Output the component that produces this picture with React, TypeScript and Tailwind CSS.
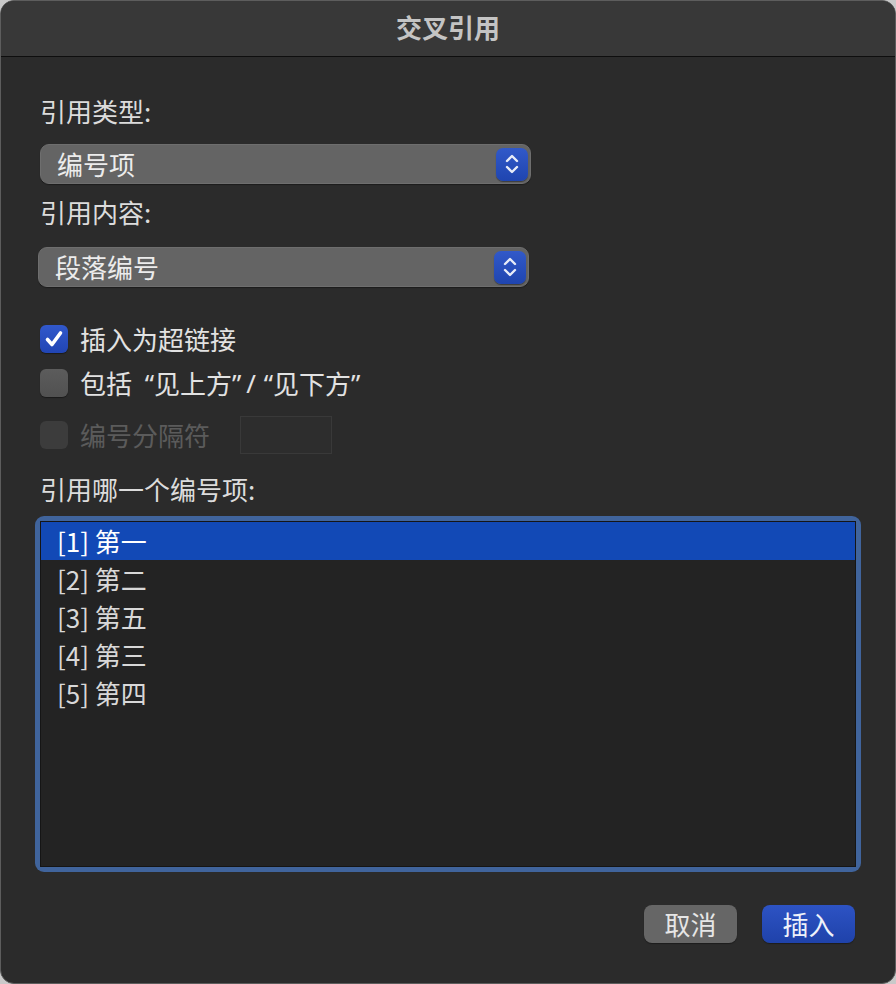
import { useState } from "react";

const font = { fontFamily: '"Noto Sans CJK SC", "Noto Sans", sans-serif' };
const latin = { fontFamily: '"Noto Sans", "Liberation Sans", sans-serif' };

const items = ["[1] 第一", "[2] 第二", "[3] 第五", "[4] 第三", "[5] 第四"];

function Stepper() {
  return (
    <div className="flex h-[33px] w-[32px] items-center justify-center rounded-[7px] bg-gradient-to-b from-[#3159c9] to-[#1f45b0] shadow-[0_1px_1px_rgba(0,0,0,0.4)]">
      <svg width="16" height="22" viewBox="0 0 16 22" fill="none" stroke="#e8ecf8" strokeWidth="2.4" strokeLinecap="round" strokeLinejoin="round">
        <path d="M3 8 L8 3 L13 8" />
        <path d="M3 14 L8 19 L13 14" />
      </svg>
    </div>
  );
}

function Select({ value, className }: { value: string; className?: string }) {
  return (
    <div className={`flex h-[40px] w-[491px] items-center justify-between rounded-[9px] border border-[#6e6e6e] bg-[#646464] pl-[16px] pr-[2px] shadow-[0_1px_1px_rgba(0,0,0,0.35)] ${className ?? ""}`}>
      <span className="text-[26px] leading-[34px] text-[#ececec]">{value}</span>
      <Stepper />
    </div>
  );
}

function Checkbox({ checked, disabled, children }: { checked?: boolean; disabled?: boolean; children: React.ReactNode }) {
  return (
    <div className="flex items-center">
      {checked ? (
        <div className="flex h-[28px] w-[28px] items-center justify-center rounded-[6px] bg-gradient-to-b from-[#3158cb] to-[#2145b4] shadow-[0_1px_1px_rgba(0,0,0,0.4)]">
          <svg width="20" height="18" viewBox="0 0 20 18" fill="none" stroke="#ffffff" strokeWidth="3.6" strokeLinecap="round" strokeLinejoin="round">
            <path d="M3.5 9.5 L8 14.5 L16.5 3" />
          </svg>
        </div>
      ) : (
        <div
          className={`h-[28px] w-[28px] rounded-[6px] ${
            disabled ? "bg-[#3c3c3c]" : "bg-gradient-to-b from-[#5c5c5c] to-[#515151] shadow-[0_1px_1px_rgba(0,0,0,0.4)]"
          }`}
        />
      )}
      <span className={`ml-[12px] flex text-[26px] leading-[34px] ${disabled ? "text-[#5b5b5b]" : "text-[#e2e2e2]"}`}>{children}</span>
    </div>
  );
}

// quote / slash glyphs sized to sit like the system font's
function Q({ ch, w, align }: { ch: string; w: string; align: string }) {
  return (
    <span className={`inline-block ${w} ${align}`} style={latin}>
      {ch}
    </span>
  );
}

export default function App() {
  const [selected, setSelected] = useState(0);

  return (
    <div className="h-[984px] w-[896px] bg-[#c9c9c9]" style={font}>
      <div className="flex h-full flex-col overflow-hidden rounded-[14px] border border-[#5d5d5d] bg-[#2b2b2b]">
        {/* Title bar */}
        <div className="flex h-[56px] shrink-0 items-center justify-center border-b border-[#0e0e0e] bg-[#383838]">
          <span className="mt-[-3px] text-[26px] font-semibold leading-[34px] text-[#c4c4c4]">交叉引用</span>
        </div>

        <div className="flex flex-1 flex-col pl-[39px] pr-[34px] pt-[37px]">
          <div className="text-[26px] leading-[34px] text-[#dcdcdc]">引用类型:</div>
          <Select value="编号项" className="mt-[16px]" />

          <div className="mt-[11px] text-[26px] leading-[34px] text-[#dcdcdc]">引用内容:</div>
          <Select value="段落编号" className="ml-[-2px] mt-[18px]" />

          <div className="mt-[35px] flex flex-col">
            <Checkbox checked>插入为超链接</Checkbox>
            <div className="mt-[10px]">
              <Checkbox>
                包括
                <Q ch="“" w="w-[22px]" align="text-right" />
                见上方
                <Q ch="”" w="w-[14px]" align="text-left" />
                <Q ch="/" w="w-[10px]" align="text-center" />
                <Q ch="“" w="w-[17px]" align="text-right" />
                见下方
                <Q ch="”" w="w-[14px]" align="text-left" />
              </Checkbox>
            </div>
            <div className="mt-[16px] flex h-[38px] items-center">
              <Checkbox disabled>编号分隔符</Checkbox>
              <div className="ml-[30px] h-[38px] w-[92px] border border-[#393939] bg-[#2d2d2d]" />
            </div>
          </div>

          <div className="mt-[18px] text-[26px] leading-[34px] text-[#dcdcdc]">引用哪一个编号项:</div>

          {/* List box with focus ring */}
          <div className="ml-[-5px] mt-[10px] h-[356px] rounded-[9px] bg-[#40649c] p-[5px]">
            <div className="h-full overflow-hidden border border-[#151515] bg-[#232323]">
              {items.map((item, i) => (
                <div
                  key={item}
                  onClick={() => setSelected(i)}
                  className={`flex h-[38px] items-center pl-[16px] text-[26px] leading-[34px] ${
                    selected === i ? "bg-[#1249b6] text-white" : "text-[#d8d8d8]"
                  }`}
                >
                  {item}
                </div>
              ))}
            </div>
          </div>

          <div className="mt-[33px] flex justify-end gap-[25px] pr-[6px]">
            <button className="h-[38px] w-[93px] rounded-[8px] bg-[#666666] text-[26px] leading-[34px] text-[#e6e6e6] shadow-[0_1px_1px_rgba(0,0,0,0.35)]">
              取消
            </button>
            <button className="h-[38px] w-[93px] rounded-[8px] bg-gradient-to-b from-[#2d53c4] to-[#1f42aa] text-[26px] leading-[34px] text-[#eef1fa] shadow-[0_1px_1px_rgba(0,0,0,0.35)]">
              插入
            </button>
          </div>
        </div>
      </div>
    </div>
  );
}
